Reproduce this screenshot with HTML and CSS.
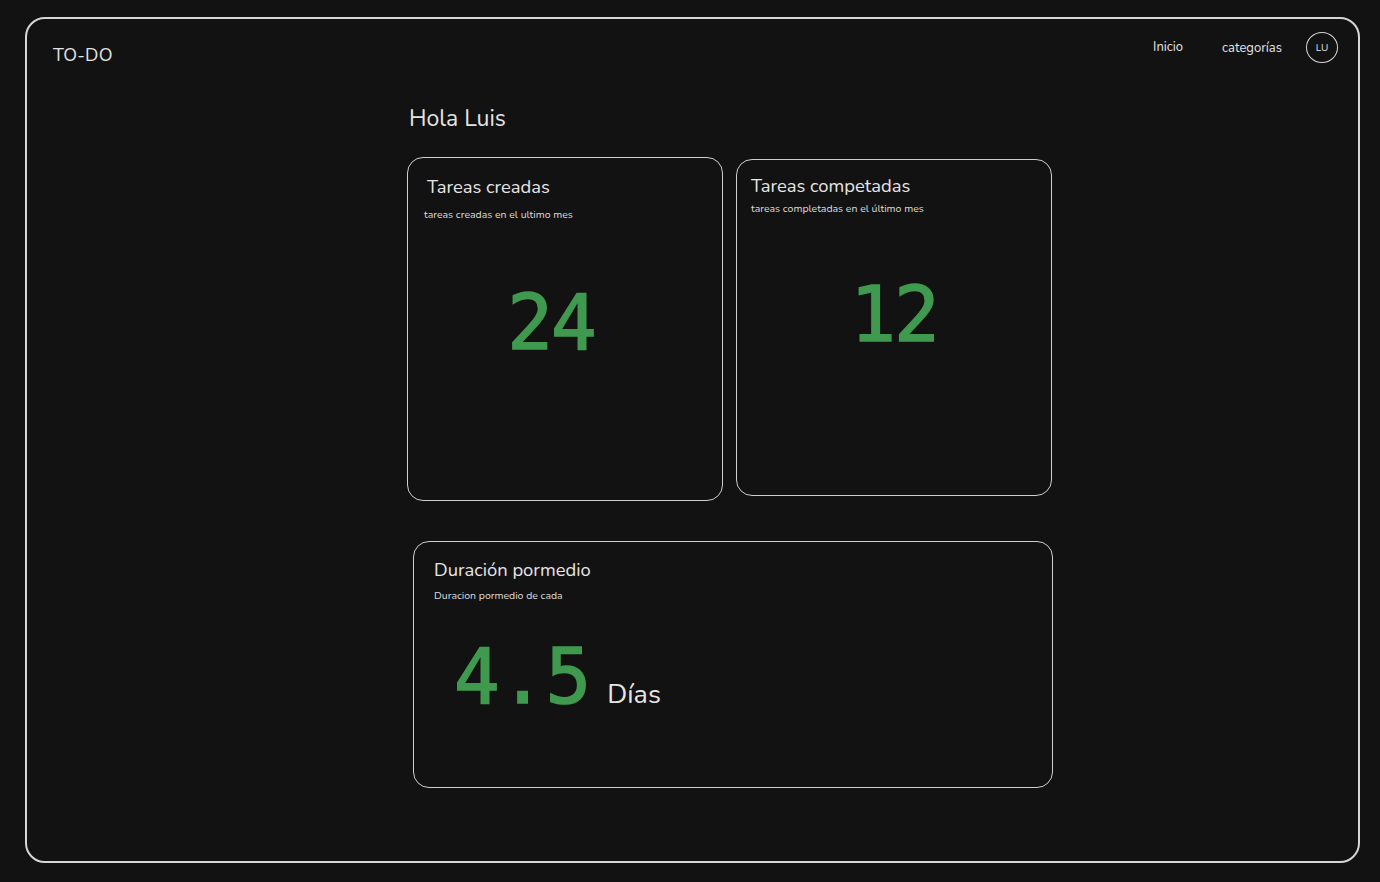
FILE: index.html
```html
<!DOCTYPE html>
<html lang="es">
<head>
<meta charset="utf-8">
<title>TO-DO</title>
<link rel="stylesheet" href="styles.css">
</head>
<body>
<div class="frame">
  <header class="topbar">
    <div class="brand">TO-DO</div>
    <nav class="nav">
      <a class="nav-link nav-inicio">Inicio</a>
      <a class="nav-link nav-cat">categorías</a>
      <span class="avatar">LU</span>
    </nav>
  </header>
  <main class="main">
    <h1 class="greeting">Hola Luis</h1>
    <div class="cards">
      <section class="card card-a">
        <h2 class="card-title">Tareas creadas</h2>
        <p class="card-sub">tareas creadas en el ultimo mes</p>
        <div class="big big-a">24</div>
      </section>
      <section class="card card-b">
        <h2 class="card-title">Tareas competadas</h2>
        <p class="card-sub">tareas completadas en el último mes</p>
        <div class="big big-b">12</div>
      </section>
    </div>
    <section class="card card-wide">
      <h2 class="card-title">Duración pormedio</h2>
      <p class="card-sub">Duracion pormedio de cada</p>
      <div class="duration">
        <span class="big big-c">4.5</span>
        <span class="unit">Días</span>
      </div>
    </section>
  </main>
</div>
</body>
</html>
```

FILE: styles.css
```css
* { box-sizing: border-box; }

html, body {
  margin: 0;
  padding: 0;
  background: #121212;
}

body {
  font-family: "Nunito", "Noto Sans", "Open Sans", sans-serif;
  color: #e2e2e2;
  width: 1380px;
  height: 882px;
  overflow: hidden;
}

.frame {
  margin: 17px 0 0 25px;
  width: 1335px;
  height: 846px;
  border: 2px solid #d6d6d6;
  border-radius: 20px;
}

.topbar {
  display: flex;
  justify-content: space-between;
  align-items: flex-start;
  padding: 24px 20px 0 26px;
}

.brand {
  font-size: 18px;
  line-height: 24px;
  letter-spacing: 0.2px;
  color: #e4e4e4;
}

.nav {
  display: flex;
  align-items: center;
  margin-top: -11px;
}

.nav-link {
  font-size: 13px;
  color: #e4e4e4;
  text-decoration: none;
}

.nav-inicio { margin-top: -2px; }

.nav-cat { margin-left: 39px; }

.avatar {
  margin-left: 24px;
  width: 32px;
  height: 31px;
  border: 1px solid #d6d6d6;
  border-radius: 50%;
  display: flex;
  align-items: center;
  justify-content: center;
  font-size: 10px;
  color: #e4e4e4;
}

.main {
  margin-left: 380px;
  width: 646px;
}

.greeting {
  margin: 37px 0 0 2px;
  font-size: 23px;
  font-weight: 400;
  line-height: 30px;
  color: #e4e4e4;
}

.cards {
  display: flex;
  align-items: flex-start;
  gap: 14px;
  margin-top: 23px;
}

.card {
  border: 1px solid #cfcfcf;
  border-radius: 16px;
}

.card-a {
  width: 316px;
  height: 344px;
  padding: 17px 18px 0 18px;
}

.card-b {
  width: 316px;
  height: 337px;
  margin-top: 2px;
  margin-left: -1px;
  padding: 14px 14px 0 14px;
}

.card-title {
  margin: 0;
  font-size: 18.4px;
  font-weight: 400;
  line-height: 24px;
  color: #e6e6e6;
}

.card-sub {
  margin: 6px 0 0 0;
  font-size: 10.5px;
  line-height: 13px;
  color: #dcdcdc;
}

.card-a .card-title { padding-left: 1px; }
.card-a .card-sub { margin-top: 9px; margin-left: -2px; }
.card-b .card-sub { margin-top: 4px; }

.big {
  font-family: "DejaVu Sans Mono", "Liberation Mono", monospace;
  color: #3f9a4f;
  font-size: 76px;
  line-height: 80px;
  letter-spacing: -2px;
  -webkit-text-stroke: 1.5px #3f9a4f;
}

.big-a {
  text-align: center;
  margin-top: 62px;
  margin-right: 28px;
}

.big-b {
  text-align: center;
  margin-top: 60px;
}

.card-wide {
  width: 640px;
  height: 247px;
  margin: 40px 0 0 6px;
  padding: 16px 18px 0 20px;
}

.card-wide .card-sub { margin-top: 7px; }

.duration {
  display: flex;
  align-items: baseline;
  margin: 35px 0 0 20px;
}

.big-c {
  letter-spacing: 0px;
}

.unit {
  margin-left: 16px;
  font-size: 27px;
  color: #e6e6e6;
}
```
